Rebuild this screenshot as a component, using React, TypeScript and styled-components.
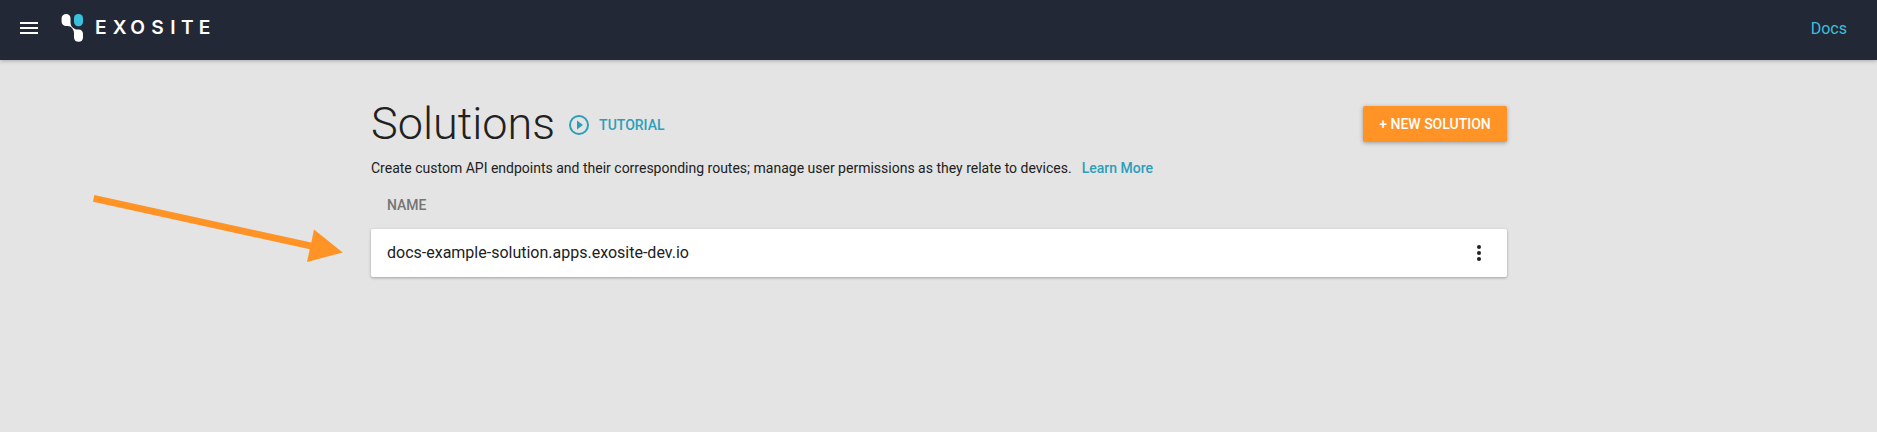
import React from 'react';
import styled, { createGlobalStyle } from 'styled-components';

const GlobalStyle = createGlobalStyle`
  *, *::before, *::after { box-sizing: border-box; }
  body {
    margin: 0;
    min-height: 100vh;
    background: #e4e4e4;
    color: #212121;
    font-family: Roboto, "Liberation Sans", sans-serif;
    overflow: hidden;
    -webkit-font-smoothing: antialiased;
  }
`;

const TopBar = styled.header`
  display: flex;
  align-items: center;
  justify-content: space-between;
  height: 60px;
  padding: 0 30px 4px 17px;
  background: #222835;
  box-shadow: 0 1px 4px rgba(0, 0, 0, 0.26);
`;

const Brand = styled.div`
  display: flex;
  align-items: center;
  gap: 20px;
`;

const MenuButton = styled.button`
  display: flex;
  padding: 0;
  border: 0;
  background: none;
`;

const Logo = styled.svg`
  display: block;
`;

const Wordmark = styled.text`
  font-family: Inter, sans-serif;
  font-size: 19.2px;
  font-weight: 600;
  fill: #fff;
`;

const DocsLink = styled.a`
  padding-top: 2px;
  color: #3bc0dc;
  font-size: 16px;
  line-height: 24px;
`;

const Main = styled.main`
  width: 1136px;
  margin: 46px 0 0 371px;
`;

const TitleRow = styled.div`
  display: flex;
  align-items: center;
  height: 36px;
`;

const Title = styled.h1`
  margin: 0 14px 0 0;
  font-size: 45px;
  font-weight: 300;
  line-height: 48px;
`;

const TutorialLink = styled.a`
  display: flex;
  align-items: center;
  gap: 10px;
  padding-top: 2px;
  color: #2b9fb9;
  font-size: 14px;
  font-weight: 500;
  line-height: 20px;
`;

const NewButton = styled.button`
  width: 144px;
  height: 36px;
  margin-left: auto;
  padding: 0;
  border: 0;
  border-radius: 2px;
  background: #ff9326;
  color: #fff;
  font: 500 14px/36px Roboto, sans-serif;
  box-shadow: 0 1px 4px rgba(0, 0, 0, 0.32);
`;

const Description = styled.p`
  margin: 16px 0 0;
  font-size: 14px;
  line-height: 20px;
  white-space: nowrap;
`;

const LearnMore = styled.a`
  margin-left: 10px;
  color: #2b9fb9;
  font-weight: 500;
`;

const ColumnHeader = styled.div`
  height: 51px;
  padding: 17px 16px 0;
  color: #757575;
  font-size: 14px;
  font-weight: 500;
  line-height: 20px;
`;

const SolutionRow = styled.div`
  display: flex;
  align-items: center;
  justify-content: space-between;
  height: 48px;
  padding: 0 16px;
  border-radius: 2px;
  background: #fff;
  box-shadow: 0 1px 3px rgba(0, 0, 0, 0.3);
`;

const SolutionName = styled.span`
  font-size: 16px;
  line-height: 24px;
`;

const MoreButton = styled.button`
  display: flex;
  padding: 0;
  border: 0;
  background: none;
`;

const Pointer = styled.svg`
  position: absolute;
  left: 90px;
  top: 190px;
`;

export default function App() {
  return (
    <>
      <GlobalStyle />
      <TopBar>
        <Brand>
          <MenuButton aria-label="Menu">
            <svg width="24" height="24" viewBox="0 0 24 24" fill="#fff">
              <path d="M3 18h18v-2H3v2zm0-5h18v-2H3v2zm0-7v2h18V6H3z" />
            </svg>
          </MenuButton>
          <Logo width="152" height="32" viewBox="0 0 152 32">
            <path
              fill="#fff"
              d="M5.200 2C7.800 2 9.500 3.900 9.500 6.300V10.800C9.500 13.800 11.300 15.500 13.500 16.800C14.800 17.600 16 17.600 17.600 17.600C20.200 17.600 22 19.400 22 21.800V25.400C22 28 20.200 29.800 17.600 29.800C15 29.800 13 28 13 25.400V21.300C13 18.600 12 16.800 10.200 15.200C9 14.200 7.600 14.100 5.200 14.100C2.600 14.100.6 12.300.6 9.800V6.300C.6 3.800 2.600 2 5.200 2z"
            />
            <rect x="13" y="2" width="9" height="12.300" rx="4.200" fill="#39c0dd" />
            <Wordmark x="33.900 51.700 69.300 90.300 109.300 119.900 137.800" y="22.400">EXOSITE</Wordmark>
          </Logo>
        </Brand>
        <DocsLink>Docs</DocsLink>
      </TopBar>
      <Main>
        <TitleRow>
          <Title>Solutions</Title>
          <TutorialLink>
            <svg width="20" height="20" viewBox="0 0 20 20" fill="#2b9fb9">
              <circle cx="10" cy="10" r="9" fill="none" stroke="#2b9fb9" strokeWidth="2" />
              <path d="M8 5.500v9l6-4.500z" />
            </svg>
            TUTORIAL
          </TutorialLink>
          <NewButton>+ NEW SOLUTION</NewButton>
        </TitleRow>
        <Description>
          Create custom API endpoints and their corresponding routes; manage user permissions as they relate to devices.
          <LearnMore>Learn More</LearnMore>
        </Description>
        <ColumnHeader>NAME</ColumnHeader>
        <SolutionRow>
          <SolutionName>docs-example-solution.apps.exosite-dev.io</SolutionName>
          <MoreButton aria-label="More">
            <svg width="24" height="24" viewBox="0 0 24 24" fill="#212121">
              <circle cx="12" cy="6" r="2" />
              <circle cx="12" cy="12" r="2" />
              <circle cx="12" cy="18" r="2" />
            </svg>
          </MoreButton>
        </SolutionRow>
      </Main>
      <Pointer width="260" height="80" viewBox="0 0 260 80" fill="#ff9326">
        <path d="M4.300 5L221.300 52.500L224 39.500L252.700 62.500L217 72L219.800 59.200L3 11.800z" />
      </Pointer>
    </>
  );
}
